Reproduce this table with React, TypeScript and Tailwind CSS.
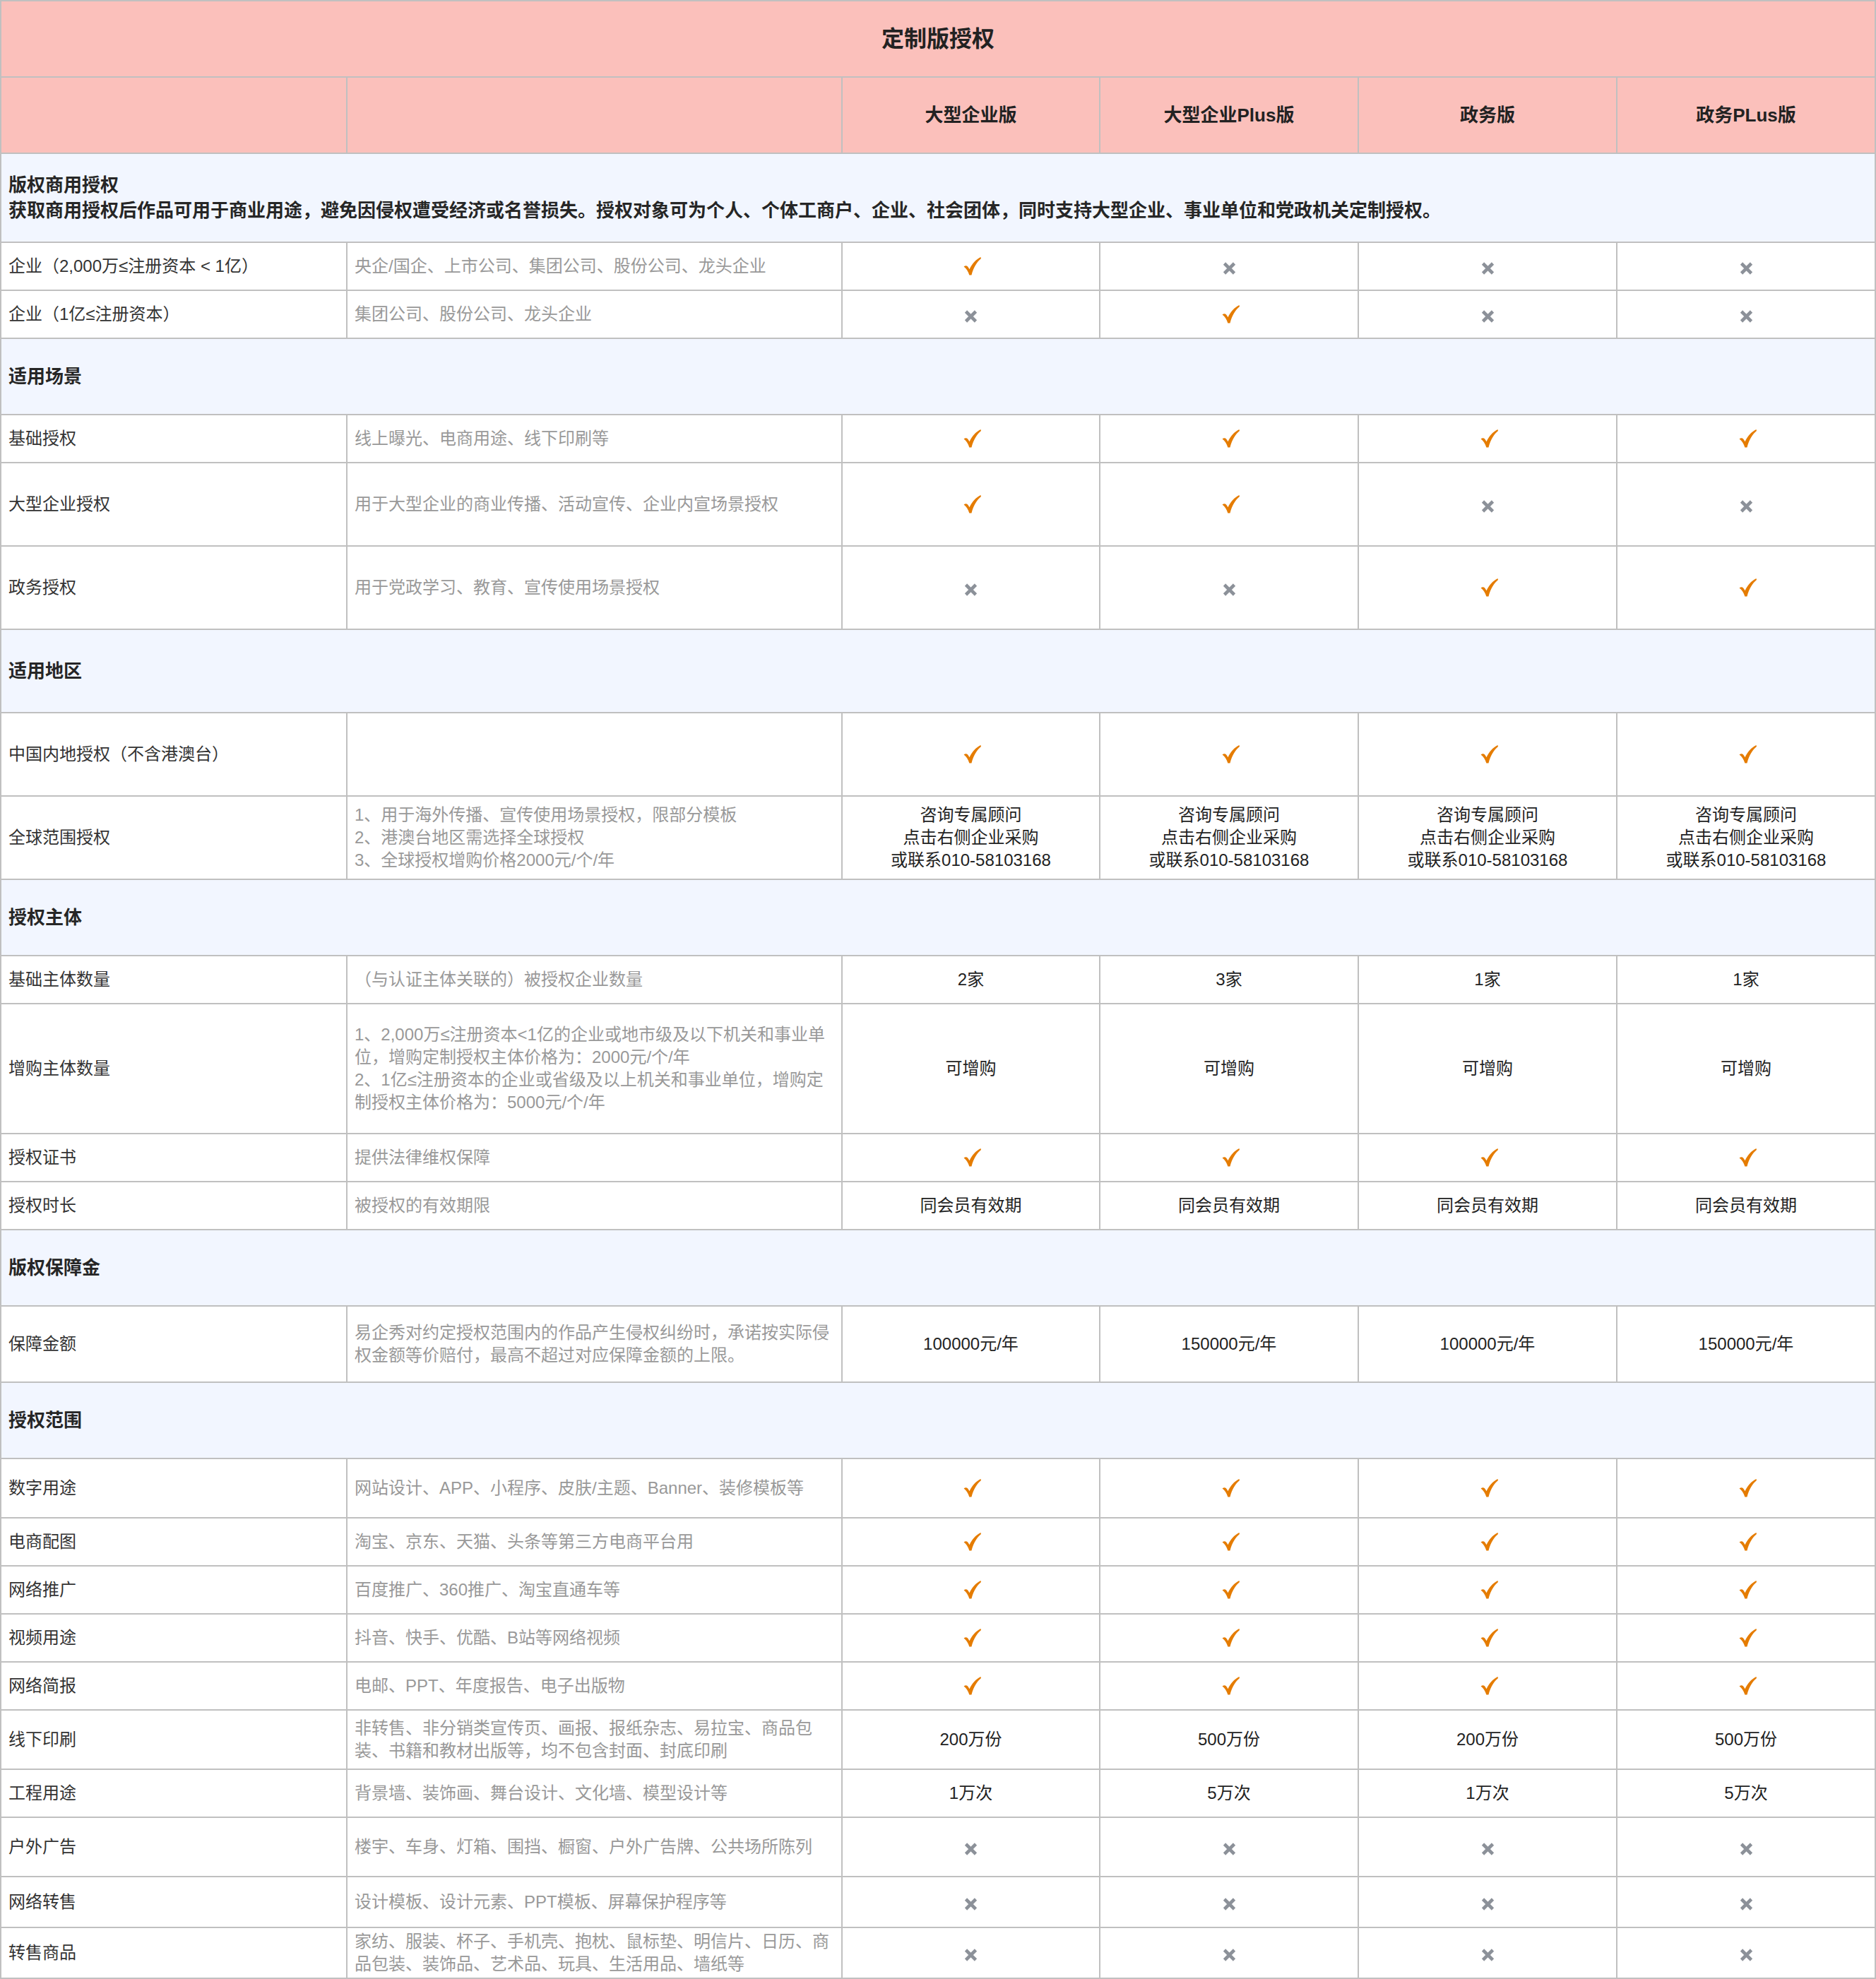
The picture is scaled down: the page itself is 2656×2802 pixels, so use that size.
import React from "react";

type Cell = "y" | "n" | string | string[];

type Row =
  | { kind: "section"; title: string; sub?: string; h: string }
  | { kind: "row"; label: string; desc: string[]; values: Cell[]; h: string };

const consult = ["咨询专属顾问", "点击右侧企业采购", "或联系010-58103168"];

const rows: Row[] = [
  {
    kind: "section",
    title: "版权商用授权",
    sub: "获取商用授权后作品可用于商业用途，避免因侵权遭受经济或名誉损失。授权对象可为个人、个体工商户、企业、社会团体，同时支持大型企业、事业单位和党政机关定制授权。",
    h: "h-[124px]",
  },
  { kind: "row", label: "企业（2,000万≤注册资本 < 1亿）", desc: ["央企/国企、上市公司、集团公司、股份公司、龙头企业"], values: ["y", "n", "n", "n"], h: "h-[66px]" },
  { kind: "row", label: "企业（1亿≤注册资本）", desc: ["集团公司、股份公司、龙头企业"], values: ["n", "y", "n", "n"], h: "h-[66px]" },
  { kind: "section", title: "适用场景", h: "h-[106px]" },
  { kind: "row", label: "基础授权", desc: ["线上曝光、电商用途、线下印刷等"], values: ["y", "y", "y", "y"], h: "h-[66px]" },
  { kind: "row", label: "大型企业授权", desc: ["用于大型企业的商业传播、活动宣传、企业内宣场景授权"], values: ["y", "y", "n", "n"], h: "h-[116px]" },
  { kind: "row", label: "政务授权", desc: ["用于党政学习、教育、宣传使用场景授权"], values: ["n", "n", "y", "y"], h: "h-[116px]" },
  { kind: "section", title: "适用地区", h: "h-[116px]" },
  { kind: "row", label: "中国内地授权（不含港澳台）", desc: [], values: ["y", "y", "y", "y"], h: "h-[116px]" },
  {
    kind: "row",
    label: "全球范围授权",
    desc: ["1、用于海外传播、宣传使用场景授权，限部分模板", "2、港澳台地区需选择全球授权", "3、全球授权增购价格2000元/个/年"],
    values: [consult, consult, consult, consult],
    h: "h-[116px]",
  },
  { kind: "section", title: "授权主体", h: "h-[106px]" },
  { kind: "row", label: "基础主体数量", desc: ["（与认证主体关联的）被授权企业数量"], values: ["2家", "3家", "1家", "1家"], h: "h-[66px]" },
  {
    kind: "row",
    label: "增购主体数量",
    desc: [
      "1、2,000万≤注册资本<1亿的企业或地市级及以下机关和事业单",
      "位，增购定制授权主体价格为：2000元/个/年",
      "2、1亿≤注册资本的企业或省级及以上机关和事业单位，增购定",
      "制授权主体价格为：5000元/个/年",
    ],
    values: ["可增购", "可增购", "可增购", "可增购"],
    h: "h-[182px]",
  },
  { kind: "row", label: "授权证书", desc: ["提供法律维权保障"], values: ["y", "y", "y", "y"], h: "h-[66px]" },
  { kind: "row", label: "授权时长", desc: ["被授权的有效期限"], values: ["同会员有效期", "同会员有效期", "同会员有效期", "同会员有效期"], h: "h-[66px]" },
  { kind: "section", title: "版权保障金", h: "h-[106px]" },
  {
    kind: "row",
    label: "保障金额",
    desc: ["易企秀对约定授权范围内的作品产生侵权纠纷时，承诺按实际侵", "权金额等价赔付，最高不超过对应保障金额的上限。"],
    values: ["100000元/年", "150000元/年", "100000元/年", "150000元/年"],
    h: "h-[106px]",
  },
  { kind: "section", title: "授权范围", h: "h-[106px]" },
  { kind: "row", label: "数字用途", desc: ["网站设计、APP、小程序、皮肤/主题、Banner、装修模板等"], values: ["y", "y", "y", "y"], h: "h-[82px]" },
  { kind: "row", label: "电商配图", desc: ["淘宝、京东、天猫、头条等第三方电商平台用"], values: ["y", "y", "y", "y"], h: "h-[66px]" },
  { kind: "row", label: "网络推广", desc: ["百度推广、360推广、淘宝直通车等"], values: ["y", "y", "y", "y"], h: "h-[66px]" },
  { kind: "row", label: "视频用途", desc: ["抖音、快手、优酷、B站等网络视频"], values: ["y", "y", "y", "y"], h: "h-[66px]" },
  { kind: "row", label: "网络简报", desc: ["电邮、PPT、年度报告、电子出版物"], values: ["y", "y", "y", "y"], h: "h-[66px]" },
  {
    kind: "row",
    label: "线下印刷",
    desc: ["非转售、非分销类宣传页、画报、报纸杂志、易拉宝、商品包", "装、书籍和教材出版等，均不包含封面、封底印刷"],
    values: ["200万份", "500万份", "200万份", "500万份"],
    h: "h-[82px]",
  },
  { kind: "row", label: "工程用途", desc: ["背景墙、装饰画、舞台设计、文化墙、模型设计等"], values: ["1万次", "5万次", "1万次", "5万次"], h: "h-[66px]" },
  { kind: "row", label: "户外广告", desc: ["楼宇、车身、灯箱、围挡、橱窗、户外广告牌、公共场所陈列"], values: ["n", "n", "n", "n"], h: "h-[82px]" },
  { kind: "row", label: "网络转售", desc: ["设计模板、设计元素、PPT模板、屏幕保护程序等"], values: ["n", "n", "n", "n"], h: "h-[70px]" },
  {
    kind: "row",
    label: "转售商品",
    desc: ["家纺、服装、杯子、手机壳、抱枕、鼠标垫、明信片、日历、商", "品包装、装饰品、艺术品、玩具、生活用品、墙纸等"],
    values: ["n", "n", "n", "n"],
    h: "h-[70px]",
  },
];

const plans = ["大型企业版", "大型企业Plus版", "政务版", "政务PLus版"];

function Check() {
  return (
    <svg width="25" height="26" viewBox="0 0 24 25" className="ml-[4px]">
      <path
        d="M0.5 13 C2 11.6 4 11.2 5.4 12.4 C6.5 13.4 7.4 15 8.2 16.6 C11.5 9.5 16.5 3.5 23.5 0 L24 2 C18.5 6.5 14 13.5 11 24.5 L8 24.5 C6.4 19.5 4 15.5 0.5 13 Z"
        fill="#e57c00"
      />
    </svg>
  );
}

function Cross() {
  return (
    <svg width="19" height="18" viewBox="0 0 19 18" className="mt-[6px]">
      <path d="M2.5 2 L16.5 16 M16.5 2 L2.5 16" stroke="#8c9199" strokeWidth="4.6" />
    </svg>
  );
}

function ValueCell({ value, h }: { value: Cell; h: string }) {
  let content: React.ReactNode;
  if (value === "y") content = <Check />;
  else if (value === "n") content = <Cross />;
  else if (Array.isArray(value)) content = value.map((l) => <div key={l}>{l}</div>);
  else content = value;

  return (
    <div className={`${h} bg-white flex flex-col items-center justify-center text-[24px] leading-[32px] text-[#222] whitespace-nowrap`}>
      {content}
    </div>
  );
}

export default function App() {
  return (
    <div className="w-[2656px] font-['Liberation_Sans','Noto_Sans_CJK_SC',sans-serif]">
      <div className="grid grid-cols-[488px_699px_363px_364px_364px_364px] gap-[2px] p-[2px] bg-[#c0c0c0]">
        {/* Title */}
        <div className="col-span-6 h-[106px] bg-[#fbc0bb] flex items-center justify-center text-[32px] font-bold text-[#222]">
          定制版授权
        </div>

        {/* Plan header */}
        <div className="h-[106px] bg-[#fbc0bb]" />
        <div className="h-[106px] bg-[#fbc0bb]" />
        {plans.map((p) => (
          <div key={p} className="h-[106px] bg-[#fbc0bb] flex items-center justify-center text-[26px] font-bold text-[#222]">
            {p}
          </div>
        ))}

        {rows.map((row, i) =>
          row.kind === "section" ? (
            <div
              key={i}
              className={`${row.h} col-span-6 bg-[#f2f6ff] flex flex-col justify-center px-[10px] text-[26px] font-bold leading-[36px] text-[#262626]`}
            >
              <div>{row.title}</div>
              {row.sub && <div>{row.sub}</div>}
            </div>
          ) : (
            <React.Fragment key={i}>
              <div className={`${row.h} bg-white flex items-center px-[10px] text-[24px] leading-[32px] text-[#333] whitespace-nowrap`}>
                {row.label}
              </div>
              <div className={`${row.h} bg-white flex flex-col justify-center px-[10px] text-[24px] leading-[32px] text-[#999] whitespace-nowrap`}>
                {row.desc.map((d) => (
                  <div key={d}>{d}</div>
                ))}
              </div>
              {row.values.map((v, j) => (
                <ValueCell key={j} value={v} h={row.h} />
              ))}
            </React.Fragment>
          )
        )}
      </div>
    </div>
  );
}
